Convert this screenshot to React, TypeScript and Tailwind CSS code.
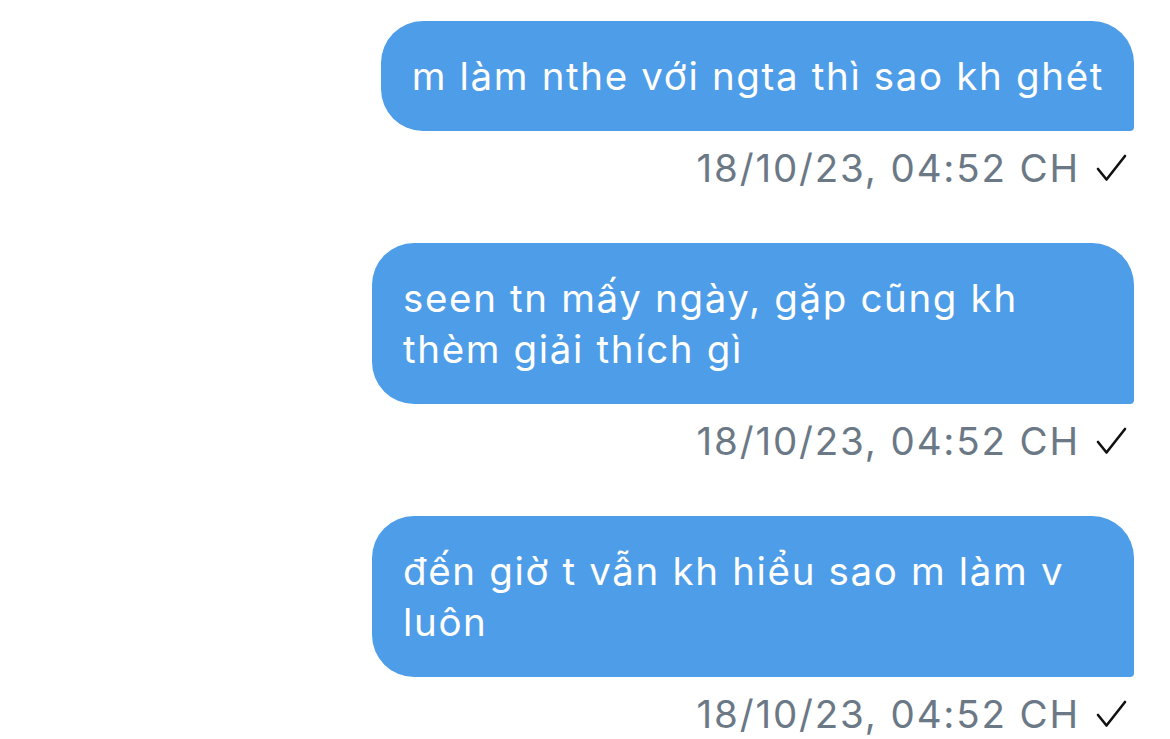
import React from "react";

const messages = [
  { text: "m làm nthe với ngta thì sao kh ghét", time: "18/10/23, 04:52 CH" },
  { text: "seen tn mấy ngày, gặp cũng kh thèm giải thích gì", time: "18/10/23, 04:52 CH" },
  { text: "đến giờ t vẫn kh hiểu sao m làm v luôn", time: "18/10/23, 04:52 CH" },
];

function Check() {
  return (
    <svg width="32" height="30" viewBox="0 0 32 30" className="ml-[16px] shrink-0">
      <path d="M2 16 L10.5 26.5 L29 3" fill="none" stroke="#111" strokeWidth="2.6" strokeLinecap="round" strokeLinejoin="round" />
    </svg>
  );
}

export default function App() {
  return (
    <div
      className="w-[1170px] h-[739px] overflow-hidden bg-white flex flex-col items-end pt-[21px] pr-[36px]"
      style={{ fontFamily: "Inter, 'Noto Sans', sans-serif" }}
    >
      {messages.map((m, i) => (
        <div key={i} className="flex flex-col items-end mb-[53px]">
          <div className="max-w-[762px] bg-[#4e9de8] text-white text-[38.5px] tracking-[1.65px] leading-[51px] pl-[31px] pr-[30px] py-[29.5px] rounded-[42px] rounded-br-[4px]">
            {m.text}
          </div>
          <div className="flex items-center mt-[15px] pr-[6px] h-[44px]">
            <span className="text-[38.5px] tracking-[1.85px] leading-[44px] text-[#6b7886]">{m.time}</span>
            <Check />
          </div>
        </div>
      ))}
    </div>
  );
}
